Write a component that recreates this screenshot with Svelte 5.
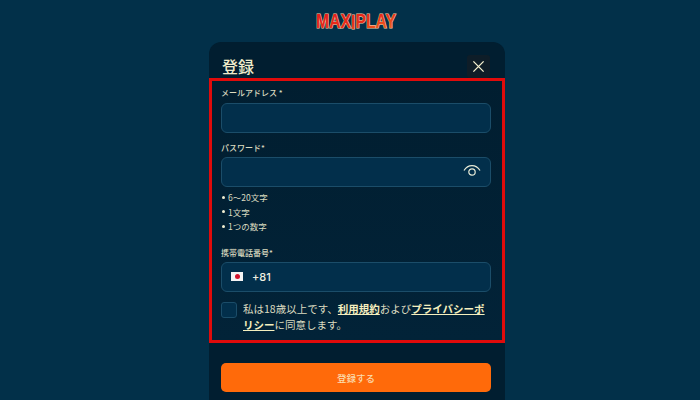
<script>
  const hints = ['6〜20文字', '1文字', '1つの数字'];
</script>

<div class="page">
  <div class="logo">
    <svg viewBox="0 0 88 24" width="88" height="24">
      <defs>
        <linearGradient id="logo-fill" x1="0" y1="0" x2="1" y2="1">
          <stop offset="0" stop-color="#e3161c" />
          <stop offset="0.55" stop-color="#e8301a" />
          <stop offset="1" stop-color="#f4801f" />
        </linearGradient>
      </defs>
      <text class="logo-text" x="4" y="18" textLength="80" lengthAdjust="spacingAndGlyphs" fill="url(#logo-fill)">MAX<tspan dy="1">I</tspan><tspan dy="-1">PLAY</tspan></text>
    </svg>
  </div>

  <div class="panel">
    <header class="panel-head">
      <h1>登録</h1>
      <button class="close" aria-label="閉じる">
        <svg viewBox="0 0 14 14" width="13" height="13">
          <path d="M1.5 1.5l11 11M12.5 1.5l-11 11" fill="none" stroke="#f5f1d0" stroke-width="1.4" />
        </svg>
      </button>
    </header>

    <section class="form">
      <div class="label first">メールアドレス *</div>
      <div class="input"></div>

      <div class="label second">パスワード*</div>
      <div class="input eye-input">
        <svg viewBox="0 0 18 14" width="18" height="14">
          <path d="M1 6.5C3 3.2 6 1.6 9 1.6s6 1.6 8 4.9" fill="none" stroke="#e8ecd8" stroke-width="1.2" />
          <circle cx="9" cy="8" r="3.2" fill="none" stroke="#e8ecd8" stroke-width="1.2" />
        </svg>
      </div>

      <ul class="hints">
        {#each hints as hint}
          <li>{hint}</li>
        {/each}
      </ul>

      <div class="label third">携帯電話番号*</div>
      <div class="input phone">
        <span class="flag"><span class="sun"></span></span>
        <span class="code">+81</span>
      </div>

      <div class="agree">
        <span class="check"></span>
        <p>私は18歳以上です、<u>利用規約</u>および<u>プライバシーポリシー</u>に同意します。</p>
      </div>
    </section>

    <div class="actions">
      <button class="submit">登録する</button>
    </div>
  </div>
</div>

<style>
  :global(body) {
    margin: 0;
    background: #023049;
    overflow: hidden;
  }

  .page {
    height: 400px;
    box-sizing: border-box;
    padding-left: 14px;
    overflow: hidden;
    display: flex;
    flex-direction: column;
    align-items: center;
    font-family: "Noto Sans CJK JP", "Noto Sans", sans-serif;
    color: #efeccb;
  }

  .logo {
    height: 42px;
    box-sizing: border-box;
    padding-top: 10px;
    margin-right: 2px;
  }

  .logo svg {
    display: block;
    overflow: visible;
  }

  .logo-text {
    font-family: "Liberation Sans", sans-serif;
    font-size: 20px;
    font-weight: 700;
    stroke: #f3c9a0;
    stroke-width: 1.2px;
    paint-order: stroke;
  }

  .panel {
    width: 296px;
    flex: 1;
    box-sizing: border-box;
    background: #011e30;
    border-radius: 12px 12px 0 0;
  }

  .panel-head {
    height: 36px;
    box-sizing: border-box;
    padding: 13px 15px 0 13px;
    display: flex;
    justify-content: space-between;
    align-items: flex-start;
  }

  h1 {
    margin: 0;
    font-family: "Noto Sans CJK JP", serif;
    font-size: 16px;
    line-height: 22px;
    font-weight: 500;
  }

  .close {
    width: 23px;
    height: 23px;
    padding: 0;
    border: 0;
    border-radius: 3px;
    background: #0e1d28;
    display: flex;
    align-items: center;
    justify-content: center;
  }

  .form {
    height: 265px;
    box-sizing: border-box;
    border: 3px solid #e00b0b;
    padding: 0 11px 0 9px;
    background: linear-gradient(#011e30, #022338);
  }

  .label {
    font-size: 8px;
    line-height: 10px;
    font-weight: 500;
    color: #dcdcc0;
  }

  .first { margin-top: 7px; margin-bottom: 5px; }
  .second { margin-top: 10px; margin-bottom: 4px; }
  .third { margin-top: 14px; margin-bottom: 4px; }

  .input {
    height: 30px;
    box-sizing: border-box;
    border: 1px solid #1b4d69;
    border-radius: 6px;
    background: #022f4b;
    display: flex;
    align-items: center;
  }

  .eye-input {
    justify-content: flex-end;
    padding-right: 9px;
  }

  .eye-input svg {
    margin-top: -2px;
  }

  .hints {
    list-style: none;
    margin: 3px 0 0;
    padding: 0;
  }

  .hints li {
    display: flex;
    align-items: center;
    height: 14.5px;
    font-size: 8.5px;
    color: #dcdcc0;
  }

  .hints li::before {
    content: '';
    width: 3px;
    height: 3px;
    margin-left: 1px;
    margin-right: 3px;
    border-radius: 50%;
    background: #f2efd2;
  }

  .phone {
    padding-left: 9px;
    gap: 9px;
  }

  .flag {
    width: 12px;
    height: 9px;
    background: #f4f4f4;
    display: flex;
    align-items: center;
    justify-content: center;
  }

  .sun {
    width: 5px;
    height: 5px;
    border-radius: 50%;
    background: #d1132c;
  }

  .code {
    font-family: "Inter", sans-serif;
    font-size: 11px;
    font-weight: 500;
    color: #eef0e0;
  }

  .agree {
    display: flex;
    align-items: flex-start;
    gap: 6px;
    margin-top: 10px;
  }

  .check {
    flex: none;
    width: 16px;
    height: 16px;
    box-sizing: border-box;
    border: 1px solid #1b4d69;
    border-radius: 3px;
    background: #022f4b;
  }

  .agree p {
    margin: -1px 0 0;
    width: 248px;
    font-size: 10.5px;
    line-height: 16px;
    color: #dcdcc0;
  }

  .agree u {
    font-weight: 700;
    color: #f5efbe;
  }

  .actions {
    padding: 20px 14px 0 12px;
  }

  .submit {
    display: block;
    width: 100%;
    height: 29px;
    padding: 0;
    border: 0;
    border-radius: 5px;
    background: #ff6a0a;
    font-family: inherit;
    font-size: 9.5px;
    font-weight: 500;
    color: #fbdcae;
  }
</style>
